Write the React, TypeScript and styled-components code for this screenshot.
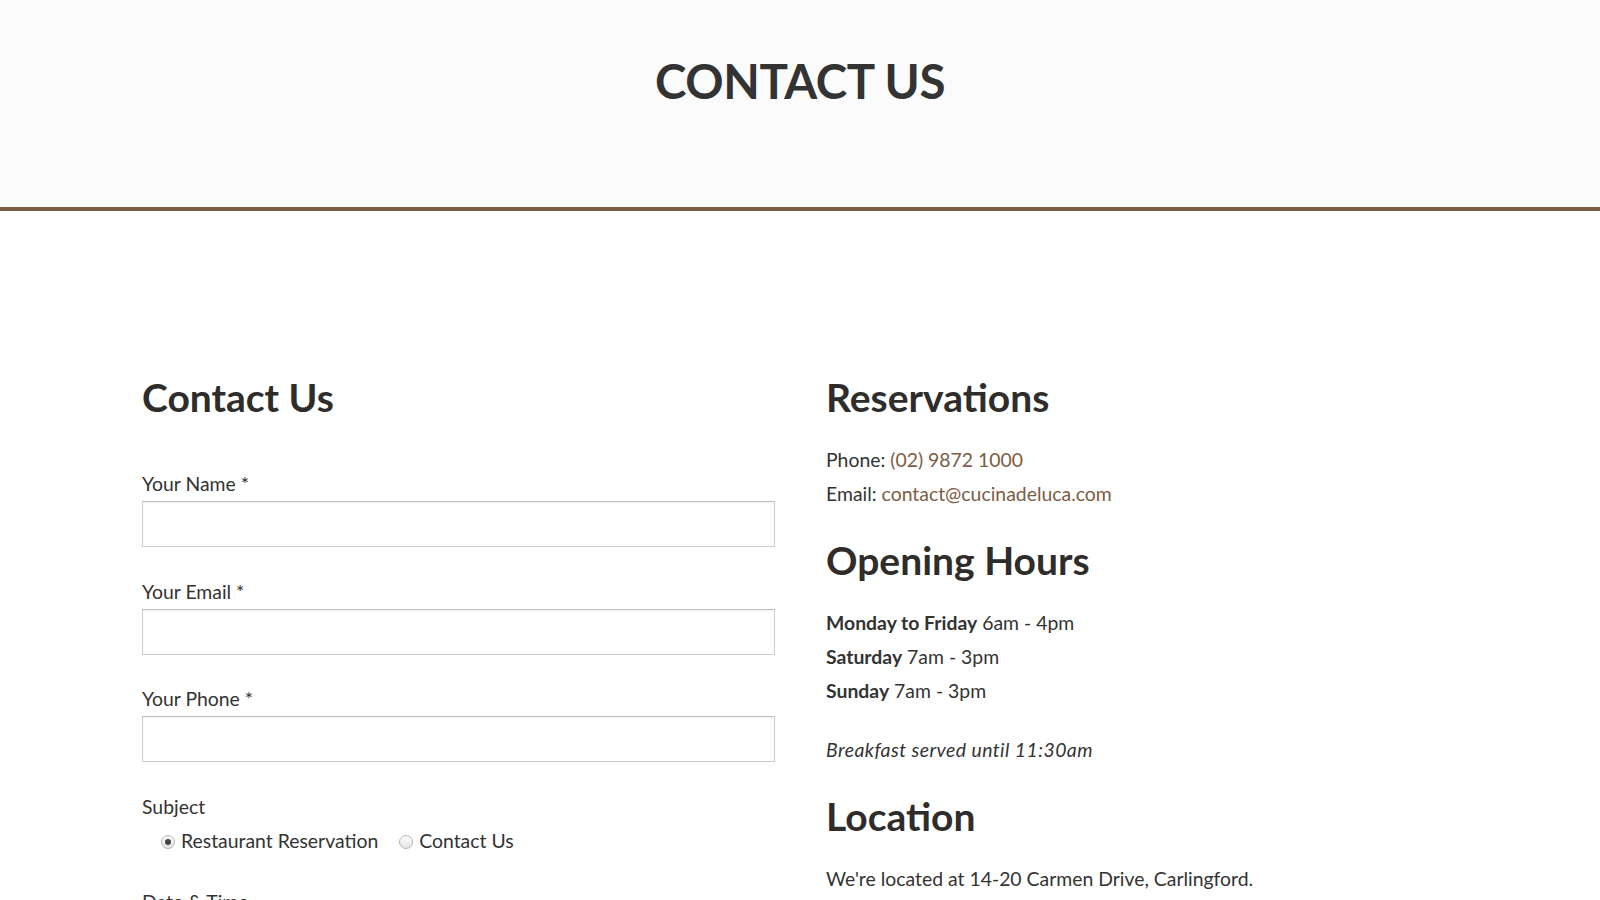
import React from 'react'
import styled, { createGlobalStyle } from 'styled-components'

const brown = '#7c5c43'

const GlobalStyle = createGlobalStyle`
  * {
    box-sizing: border-box;
  }
  body {
    margin: 0;
    background: #fff;
    color: #333;
    font-family: Lato, 'Liberation Sans', sans-serif;
    font-size: 19.4px;
  }
`

const PageHeader = styled.header`
  height: 211px;
  background: #fbfbfb;
  border-bottom: 4px solid ${brown};
  padding-top: 52px;
`

const PageTitle = styled.h1`
  margin: 0;
  text-align: center;
  font-size: 47.5px;
  line-height: 58px;
  font-weight: 700;
  color: #333;
  letter-spacing: -0.4px;
`

const Main = styled.main`
  width: 1316px;
  margin: 0 auto;
  padding-top: 162px;
  display: grid;
  grid-template-columns: 633px 1fr;
  column-gap: 51px;
`

const Column = styled.section`
  display: flex;
  flex-direction: column;
`

const Heading = styled.h2`
  margin: 0 0 21px;
  font-size: 39px;
  line-height: 49px;
  font-weight: 700;
  color: #2f2d2b;
`

const Form = styled.form`
  margin-top: 24px;
  display: flex;
  flex-direction: column;
`

const Field = styled.div`
  margin-bottom: 27.5px;
  display: flex;
  flex-direction: column;
`

const Label = styled.label`
  line-height: 34px;
  color: #333;
`

const TextInput = styled.input`
  width: 100%;
  height: 46px;
  border: 1px solid #cfcfcf;
  border-top-color: #bdbdbd;
  box-shadow: inset 0 1px 2px rgba(0, 0, 0, 0.06);
  background: #fff;
  font: inherit;
  padding: 0 10px;
  outline: none;
`

const RadioRow = styled.div`
  display: flex;
  align-items: center;
  gap: 21px;
  padding-left: 19px;
  line-height: 34px;
`

const RadioOption = styled.label`
  display: flex;
  align-items: center;
  gap: 6px;
`

const Radio = styled.input`
  appearance: none;
  margin: 2px 0 0;
  width: 14px;
  height: 14px;
  border-radius: 50%;
  border: 1px solid #b5b5b5;
  background: linear-gradient(#fdfdfd, #e4e4e4);
  display: grid;
  place-items: center;

  &:checked::after {
    content: '';
    width: 6px;
    height: 6px;
    border-radius: 50%;
    background: #444;
  }
`

const Text = styled.p<{ spaced?: boolean }>`
  margin: 0 0 ${p => (p.spaced ? 25 : 0)}px;
  line-height: 34px;
`

const Italic = styled(Text)`
  font-style: italic;
  letter-spacing: 0.45px;
`

const Link = styled.a`
  color: ${brown};
  text-decoration: none;
`

const hours = [
  { day: 'Monday to Friday', time: '6am - 4pm' },
  { day: 'Saturday', time: '7am - 3pm' },
  { day: 'Sunday', time: '7am - 3pm' },
]

const fields = ['Your Name *', 'Your Email *', 'Your Phone *']

const App: React.FC = () => {
  return (
    <>
      <GlobalStyle />
      <PageHeader>
        <PageTitle>CONTACT US</PageTitle>
      </PageHeader>
      <Main>
        <Column>
          <Heading>Contact Us</Heading>
          <Form onSubmit={e => e.preventDefault()}>
            {fields.map(f => (
              <Field key={f}>
                <Label>{f}</Label>
                <TextInput type="text" />
              </Field>
            ))}
            <Field>
              <Label>Subject</Label>
              <RadioRow>
                <RadioOption>
                  <Radio type="radio" name="subject" defaultChecked />
                  Restaurant Reservation
                </RadioOption>
                <RadioOption>
                  <Radio type="radio" name="subject" />
                  Contact Us
                </RadioOption>
              </RadioRow>
            </Field>
            <Field>
              <Label>Date &amp; Time</Label>
              <TextInput type="text" />
            </Field>
          </Form>
        </Column>
        <Column>
          <Heading>Reservations</Heading>
          <Text>
            Phone: <Link href="#">(02) 9872 1000</Link>
          </Text>
          <Text spaced>
            Email: <Link href="#">contact@cucinadeluca.com</Link>
          </Text>
          <Heading>Opening Hours</Heading>
          {hours.map((h, i) => (
            <Text key={h.day} spaced={i === hours.length - 1}>
              <b>{h.day}</b> {h.time}
            </Text>
          ))}
          <Italic spaced>Breakfast served until 11:30am</Italic>
          <Heading>Location</Heading>
          <Text>We're located at 14-20 Carmen Drive, Carlingford.</Text>
        </Column>
      </Main>
    </>
  )
}

export default App
